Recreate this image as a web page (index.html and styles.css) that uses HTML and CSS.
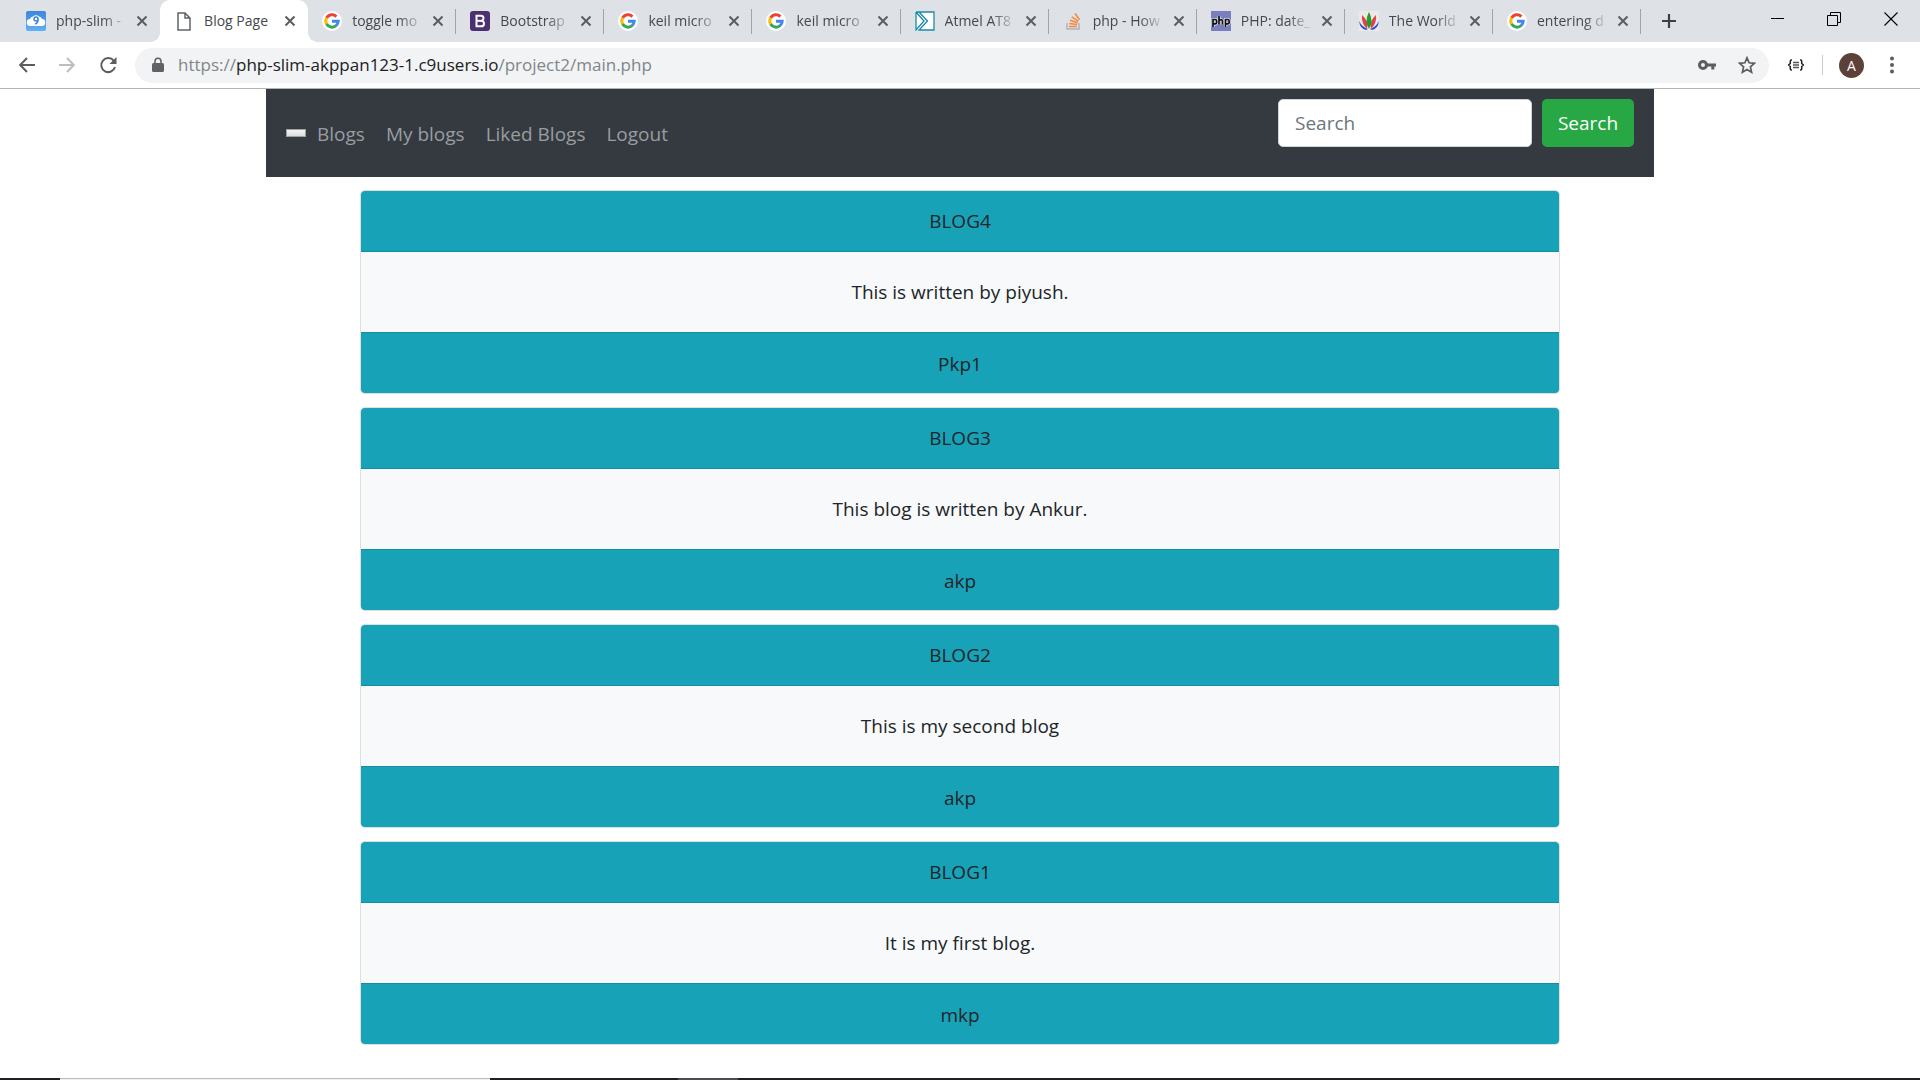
FILE: index.html
```html
<!DOCTYPE html>
<html lang="en">
<head>
<meta charset="utf-8">
<meta name="viewport" content="width=device-width, initial-scale=1">
<title>Blog Page</title>
<link rel="stylesheet" href="styles.css">
</head>
<body>
<svg class="defs" aria-hidden="true">
  <symbol id="close" viewBox="0 0 12 12"><path d="M1.500 1.500l9 9M10.500 1.500l-9 9" stroke="#5a5d61" stroke-width="2" fill="none"/></symbol>
  <symbol id="google" viewBox="0 0 20 20"><circle cx="10" cy="10" r="10" fill="#fff"/><g fill="none" stroke-width="3"><path d="M4.600 7A6.200 6.200 0 0 1 14.400 5.600" stroke="#ea4335"/><path d="M4.700 13.200A6.200 6.200 0 0 1 4.700 6.800" stroke="#fbbc05"/><path d="M14.200 14.500A6.200 6.200 0 0 1 4.600 13" stroke="#34a853"/><path d="M10 10.200h6.200A6.200 6.200 0 0 1 14 14.700" stroke="#4285f4"/></g></symbol>
</svg>
<header class="browser">
  <div class="tabstrip">
    <div class="tabs">
      <div class="tab">
        <svg class="favicon" viewBox="0 0 20 20"><defs><linearGradient id="sky" x2="0" y2="1"><stop stop-color="#3d86dd"/><stop offset="1" stop-color="#62b0f5"/></linearGradient></defs><rect width="20" height="20" rx="2" fill="url(#sky)"/><path d="M4.500 15a3.500 3.500 0 0 1-.5-7A4 4 0 0 1 7 5.500a5 5 0 0 1 6 0A4 4 0 0 1 16 8a3.500 3.500 0 0 1-.5 7z" fill="#fff"/><circle cx="10" cy="8" r="2" fill="none" stroke="#3b86d8" stroke-width="1.500"/><path d="M12 8q.3 4-3 5" fill="none" stroke="#3b86d8" stroke-width="1.500"/></svg>
        <span class="tab-title">php-slim -</span><button class="tab-close" aria-label="Close tab"><svg viewBox="0 0 12 12"><use href="#close"/></svg></button>
      </div>
      <div class="tab active">
        <svg class="favicon" viewBox="0 0 20 20"><path d="M4 2h7l5 5v12H4zM11 2v5h5" fill="none" stroke="#5f6368" stroke-width="1.500"/></svg>
        <span class="tab-title">Blog Page</span><button class="tab-close" aria-label="Close tab"><svg viewBox="0 0 12 12"><use href="#close"/></svg></button>
      </div>
      <div class="tab">
        <svg class="favicon" viewBox="0 0 20 20"><use href="#google"/></svg>
        <span class="tab-title">toggle mo</span><button class="tab-close" aria-label="Close tab"><svg viewBox="0 0 12 12"><use href="#close"/></svg></button>
      </div>
      <div class="tab">
        <svg class="favicon" viewBox="0 0 20 20"><rect width="20" height="20" rx="3" fill="#4b3072"/><path d="M6.500 4.700h4.600q2.400 0 2.400 2.500 0 1.900-1.500 2.500 2 .6 2 2.700 0 2.900-3 2.900H6.500z" fill="none" stroke="#fff" stroke-width="2"/><path d="M6.500 9.800h5.500" stroke="#fff" stroke-width="2"/></svg>
        <span class="tab-title">Bootstrap</span><button class="tab-close" aria-label="Close tab"><svg viewBox="0 0 12 12"><use href="#close"/></svg></button>
      </div>
      <div class="tab">
        <svg class="favicon" viewBox="0 0 20 20"><use href="#google"/></svg>
        <span class="tab-title">keil micro</span><button class="tab-close" aria-label="Close tab"><svg viewBox="0 0 12 12"><use href="#close"/></svg></button>
      </div>
      <div class="tab">
        <svg class="favicon" viewBox="0 0 20 20"><use href="#google"/></svg>
        <span class="tab-title">keil micro</span><button class="tab-close" aria-label="Close tab"><svg viewBox="0 0 12 12"><use href="#close"/></svg></button>
      </div>
      <div class="tab">
        <svg class="favicon" viewBox="0 0 20 20"><path d="M.5.5h19v19H.5z" fill="#fff"/><path d="M1 1h18v18H4l8.500-9L4 1M1 1v18L9 10 1 1" fill="none" stroke="#1688a5" stroke-width="1.300"/></svg>
        <span class="tab-title">Atmel AT8</span><button class="tab-close" aria-label="Close tab"><svg viewBox="0 0 12 12"><use href="#close"/></svg></button>
      </div>
      <div class="tab">
        <svg class="favicon" viewBox="0 0 20 20"><path d="M4 12v6h12v-6" fill="none" stroke="#b0b3b7" stroke-width="1.500"/><path d="M6 15.500h8M6.200 12.500l8 1M7 9.200l7.600 2.600M8.800 5.800l6.600 4.600M12 2.500l4.500 6.300" stroke="#f48a3c" stroke-width="1.600"/></svg>
        <span class="tab-title">php - How</span><button class="tab-close" aria-label="Close tab"><svg viewBox="0 0 12 12"><use href="#close"/></svg></button>
      </div>
      <div class="tab">
        <svg class="favicon" viewBox="0 0 20 20"><rect width="20" height="20" fill="#7a7ebc"/><g fill="none" stroke="#e4e5f2" stroke-width="3"><path d="M2 16V8.500h2.200q1.500 0 1.500 2.200t-1.500 2.200H2M8 5v8.500M8 9.500q3.500-2 3.500 1.200v2.800M14.500 16V8.500h2.200q1.500 0 1.500 2.200t-1.500 2.200h-2.200"/></g><g fill="none" stroke="#111" stroke-width="1.700"><path d="M2 16V8.500h2.200q1.500 0 1.500 2.200t-1.500 2.200H2M8 5v8.500M8 9.500q3.500-2 3.500 1.200v2.800M14.500 16V8.500h2.200q1.500 0 1.500 2.200t-1.500 2.200h-2.200"/></g></svg>
        <span class="tab-title">PHP: date_</span><button class="tab-close" aria-label="Close tab"><svg viewBox="0 0 12 12"><use href="#close"/></svg></button>
      </div>
      <div class="tab">
        <svg class="favicon" viewBox="0 0 20 20"><rect width="20" height="20" fill="#eceae8"/><path d="M0 10q1 8 7 9l2-1Q3 16 0 10zM20 10q-1 8-7 9l-2-1q6-2 9-8z" fill="#2f4fd0"/><path d="M3 4q-1 8 5 14 2-8-5-14zM17 4q1 8-5 14-2-8 5-14z" fill="#e0434b"/><path d="M10 1q-5 9 0 17 5-8 0-17z" fill="#1fa02c"/></svg>
        <span class="tab-title">The World</span><button class="tab-close" aria-label="Close tab"><svg viewBox="0 0 12 12"><use href="#close"/></svg></button>
      </div>
      <div class="tab">
        <svg class="favicon" viewBox="0 0 20 20"><use href="#google"/></svg>
        <span class="tab-title">entering d</span><button class="tab-close" aria-label="Close tab"><svg viewBox="0 0 12 12"><use href="#close"/></svg></button>
      </div>
    </div>
    <div class="window-area">
      <button class="icon-button" aria-label="New tab"><svg width="16" height="16" viewBox="0 0 16 16"><path d="M8 1v14M1 8h14" stroke="#3c4043" stroke-width="2.200"/></svg></button>
      <div class="window-controls">
        <button class="icon-button" aria-label="Minimize"><svg width="14" height="14" viewBox="0 0 14 14"><path d="M1 6.500h13" stroke="#000"/></svg></button>
        <button class="icon-button" aria-label="Restore"><svg width="14" height="14" viewBox="0 0 14 14"><path d="M.5 3.500h10v10H.5zM3.500 3V.5h10v10H11" fill="none" stroke="#000"/></svg></button>
        <button class="icon-button" aria-label="Close"><svg width="14" height="14" viewBox="0 0 14 14"><path d="M.5.5l13 13M13.500.5l-13 13" stroke="#000" stroke-width="1.100"/></svg></button>
      </div>
    </div>
  </div>
  <div class="toolbar">
    <div class="nav-buttons">
      <button class="icon-button" aria-label="Back"><svg width="16" height="16" viewBox="0 0 16 16"><path d="M16 8H1.500M8 1L1.200 8 8 15" fill="none" stroke="#5a5d61" stroke-width="2"/></svg></button>
      <button class="icon-button" aria-label="Forward"><svg width="16" height="16" viewBox="0 0 16 16"><path d="M0 8h14.500M8 1l6.800 7L8 15" fill="none" stroke="#bcbec1" stroke-width="2"/></svg></button>
      <button class="icon-button" aria-label="Reload"><svg width="18" height="18" viewBox="0 0 18 18"><path d="M14.800 4.800A7 7 0 1 0 16 11" fill="none" stroke="#5a5d61" stroke-width="2"/><path d="M17.500 1v7h-7z" fill="#5a5d61"/></svg></button>
    </div>
    <div class="omnibox">
      <svg width="12" height="16" viewBox="0 0 12 16"><rect y="6" width="12" height="9" rx="1.500" fill="#5f6368"/><path d="M3 7V4.300a3 3 0 0 1 6 0V7" fill="none" stroke="#5f6368" stroke-width="1.600"/></svg>
      <div class="url">https://<span class="host">php-slim-akppan123-1.c9users.io</span>/project2/main.php</div>
      <button class="icon-button" aria-label="Saved passwords"><svg width="18" height="12" viewBox="0 0 18 12"><circle cx="5" cy="6" r="3.500" fill="none" stroke="#5a5d61" stroke-width="3"/><path d="M9 6h9M14.800 6v4.500" stroke="#5a5d61" stroke-width="3"/></svg></button>
      <button class="icon-button" aria-label="Bookmark"><svg width="18" height="18" viewBox="0 0 18 18"><path d="M9 1.800l2.100 5 5.400.5-4.100 3.600 1.200 5.300L9 13.400l-4.600 2.800 1.200-5.300L1.500 7.300l5.400-.5z" fill="none" stroke="#5a5d61" stroke-width="1.700"/></svg></button>
    </div>
    <div class="tools">
      <button class="icon-button" aria-label="Extension"><svg width="16" height="12" viewBox="0 0 16 12"><path d="M4 1H3.300Q2.300 1 2.300 2v2.500L.6 6l1.700 1.500V10q0 1 1 1H4M12 1h.7q1 0 1 1v2.500L15.400 6l-1.700 1.500V10q0 1-1 1H12" fill="none" stroke="#222" stroke-width="1.500"/><path d="M5 3.500h6M5 6h6M5 8.500h6" stroke="#555" stroke-width="1.400"/></svg></button>
      <span class="divider"></span>
      <button class="avatar">A</button>
      <button class="icon-button" aria-label="Menu"><svg width="4" height="18" viewBox="0 0 4 18"><g fill="#5a5d61"><circle cx="2" cy="2.500" r="2"/><circle cx="2" cy="9" r="2"/><circle cx="2" cy="15.500" r="2"/></g></svg></button>
    </div>
  </div>
</header>
<main class="page">
  <nav class="navbar">
    <div class="nav-links">
      <button class="toggler" aria-label="Toggle navigation"></button>
      <a href="#">Blogs</a><a href="#">My blogs</a><a href="#">Liked Blogs</a><a href="#">Logout</a>
    </div>
    <form class="search">
      <input type="search" placeholder="Search" aria-label="Search">
      <button type="button">Search</button>
    </form>
  </nav>
  <div class="cards">
    <article class="card"><div class="card-header">BLOG4</div><div class="card-body">This is written by piyush.</div><div class="card-footer">Pkp1</div></article>
    <article class="card"><div class="card-header">BLOG3</div><div class="card-body">This blog is written by Ankur.</div><div class="card-footer">akp</div></article>
    <article class="card"><div class="card-header">BLOG2</div><div class="card-body">This is my second blog</div><div class="card-footer">akp</div></article>
    <article class="card"><div class="card-header">BLOG1</div><div class="card-body">It is my first blog.</div><div class="card-footer">mkp</div></article>
  </div>
</main>
<footer class="taskbar"><span class="task-start"></span><span class="task-search"></span><span class="task-icons"></span><span class="task-active"></span></footer>
</body>
</html>
```
FILE: styles.css
```css
* { box-sizing: border-box; }
body {
  margin: 0;
  min-height: 100vh;
  display: flex;
  flex-direction: column;
  background: #fff;
  color: #212529;
  font: 19px/30px "Open Sans", "Noto Sans", sans-serif;
}
button, input { font: inherit; }
svg { display: block; }
.defs { position: absolute; width: 0; height: 0; }
.icon-button { padding: 0; border: 0; background: none; flex: none; }

/* Browser window */
.browser { border-bottom: 1px solid #b3b3b5; }
.tabstrip {
  display: flex;
  height: 42px;
  padding-left: 12px;
  background: #dee1e6;
}
.tabs { display: flex; flex: 1; min-width: 0; }
.tab {
  position: relative;
  display: flex;
  align-items: center;
  flex: 1;
  min-width: 0;
  padding: 0 12px 0 14px;
  font-size: 14px;
  line-height: 20px;
  color: #45494d;
}
.tab::after {
  content: "";
  position: absolute;
  right: 0;
  top: 9px;
  width: 1px;
  height: 25px;
  background: #a1a4a9;
}
.tab:first-child::after { display: none; }
.favicon { width: 20px; height: 20px; flex: none; margin-right: 10px; }
.tab-title {
  flex: 1;
  min-width: 0;
  overflow: hidden;
  white-space: nowrap;
  -webkit-mask-image: linear-gradient(to right, #000 65%, transparent);
  mask-image: linear-gradient(to right, #000 65%, transparent);
}
.tab-close { width: 12px; height: 12px; margin-left: 8px; padding: 0; border: 0; background: none; flex: none; }
.tab.active { background: #fff; border-radius: 10px 10px 0 0; }
.tab.active .tab-title { -webkit-mask-image: none; mask-image: none; }
.tab.active::before, .tab.active::after {
  content: "";
  position: absolute;
  top: auto;
  bottom: 0;
  width: 10px;
  height: 10px;
}
.tab.active::before { left: -10px; background: radial-gradient(circle at 0 0, transparent 10px, #fff 10px); }
.tab.active::after { right: -10px; background: radial-gradient(circle at 100% 0, transparent 10px, #fff 10px); }
.window-area {
  display: flex;
  justify-content: space-between;
  align-items: center;
  width: 279px;
  padding: 0 22px 0 20px;
}
.window-controls { display: flex; gap: 43px; padding-bottom: 4px; }
.toolbar { display: flex; align-items: center; height: 46px; padding: 0 26px 0 19px; }
.nav-buttons { display: flex; align-items: center; gap: 24px; width: 116px; }
.omnibox {
  display: flex;
  align-items: center;
  flex: 1;
  min-width: 0;
  height: 35px;
  padding: 0 13px 0 17px;
  border-radius: 18px;
  background: #f1f3f4;
  gap: 22px;
}
.url {
  flex: 1;
  min-width: 0;
  margin-left: -8px;
  overflow: hidden;
  white-space: nowrap;
  font-size: 17px;
  line-height: 24px;
  color: #80868b;
}
.host { color: #202124; }
.tools { display: flex; align-items: center; justify-content: space-between; width: 125px; padding-left: 19px; }
.divider { width: 1px; height: 20px; background: #c8cacd; }
.avatar {
  width: 25px;
  height: 25px;
  margin: 0 8px 0 -2px;
  padding: 0;
  border: 0;
  border-radius: 50%;
  background: #5d4037;
  color: #fff;
  font-size: 14px;
  line-height: 25px;
}

/* Blog page */
.page { flex: 1; width: 100%; max-width: 1388px; margin: 0 auto; }
.navbar {
  display: flex;
  justify-content: space-between;
  padding: 10px 20px;
  background: #343a40;
}
.nav-links { display: flex; align-items: center; gap: 1px; }
.nav-links a { padding: 11px 10px 9px; color: #9a9da0; text-decoration: none; }
.toggler {
  width: 20px;
  height: 8px;
  padding: 0;
  border: 1px solid #a0a0a0;
  background: linear-gradient(#f4f4f4, #dddddd);
}
.search { display: flex; gap: 10px; margin-bottom: 20px; }
.search input {
  width: 254px;
  height: 48px;
  padding: 0 16px;
  border: 1px solid #ced4da;
  border-radius: 5px;
  background: #fff;
  color: #495057;
}
.search input::placeholder { color: #6c757d; opacity: 1; }
.search button {
  width: 92px;
  padding: 0;
  border: 0;
  border-radius: 5px;
  background: #28a745;
  color: #fff;
}
.cards {
  display: flex;
  flex-direction: column;
  gap: 13px;
  max-width: 1200px;
  margin: 13px auto 0;
}
.card {
  overflow: hidden;
  border: 1px solid #dfdfdf;
  border-radius: 5px;
  background: #f8f9fa;
  text-align: center;
}
.card-header, .card-footer { background: #17a2b8; }
.card-header { padding: 15px 25px; border-bottom: 1px solid #148ea1; }
.card-body { padding: 25px; }
.card-footer { padding: 16px 25px 14px; border-top: 1px solid #148ea1; }

/* Sliver of the desktop taskbar */
.taskbar { display: flex; height: 2px; background: #202022; }
.task-start { width: 60px; }
.task-search { width: 430px; border-top: 1px solid #bababa; background: #f0f0f0; }
.task-icons { width: 188px; }
.task-active { width: 60px; background: #4c4c4e; }
```
